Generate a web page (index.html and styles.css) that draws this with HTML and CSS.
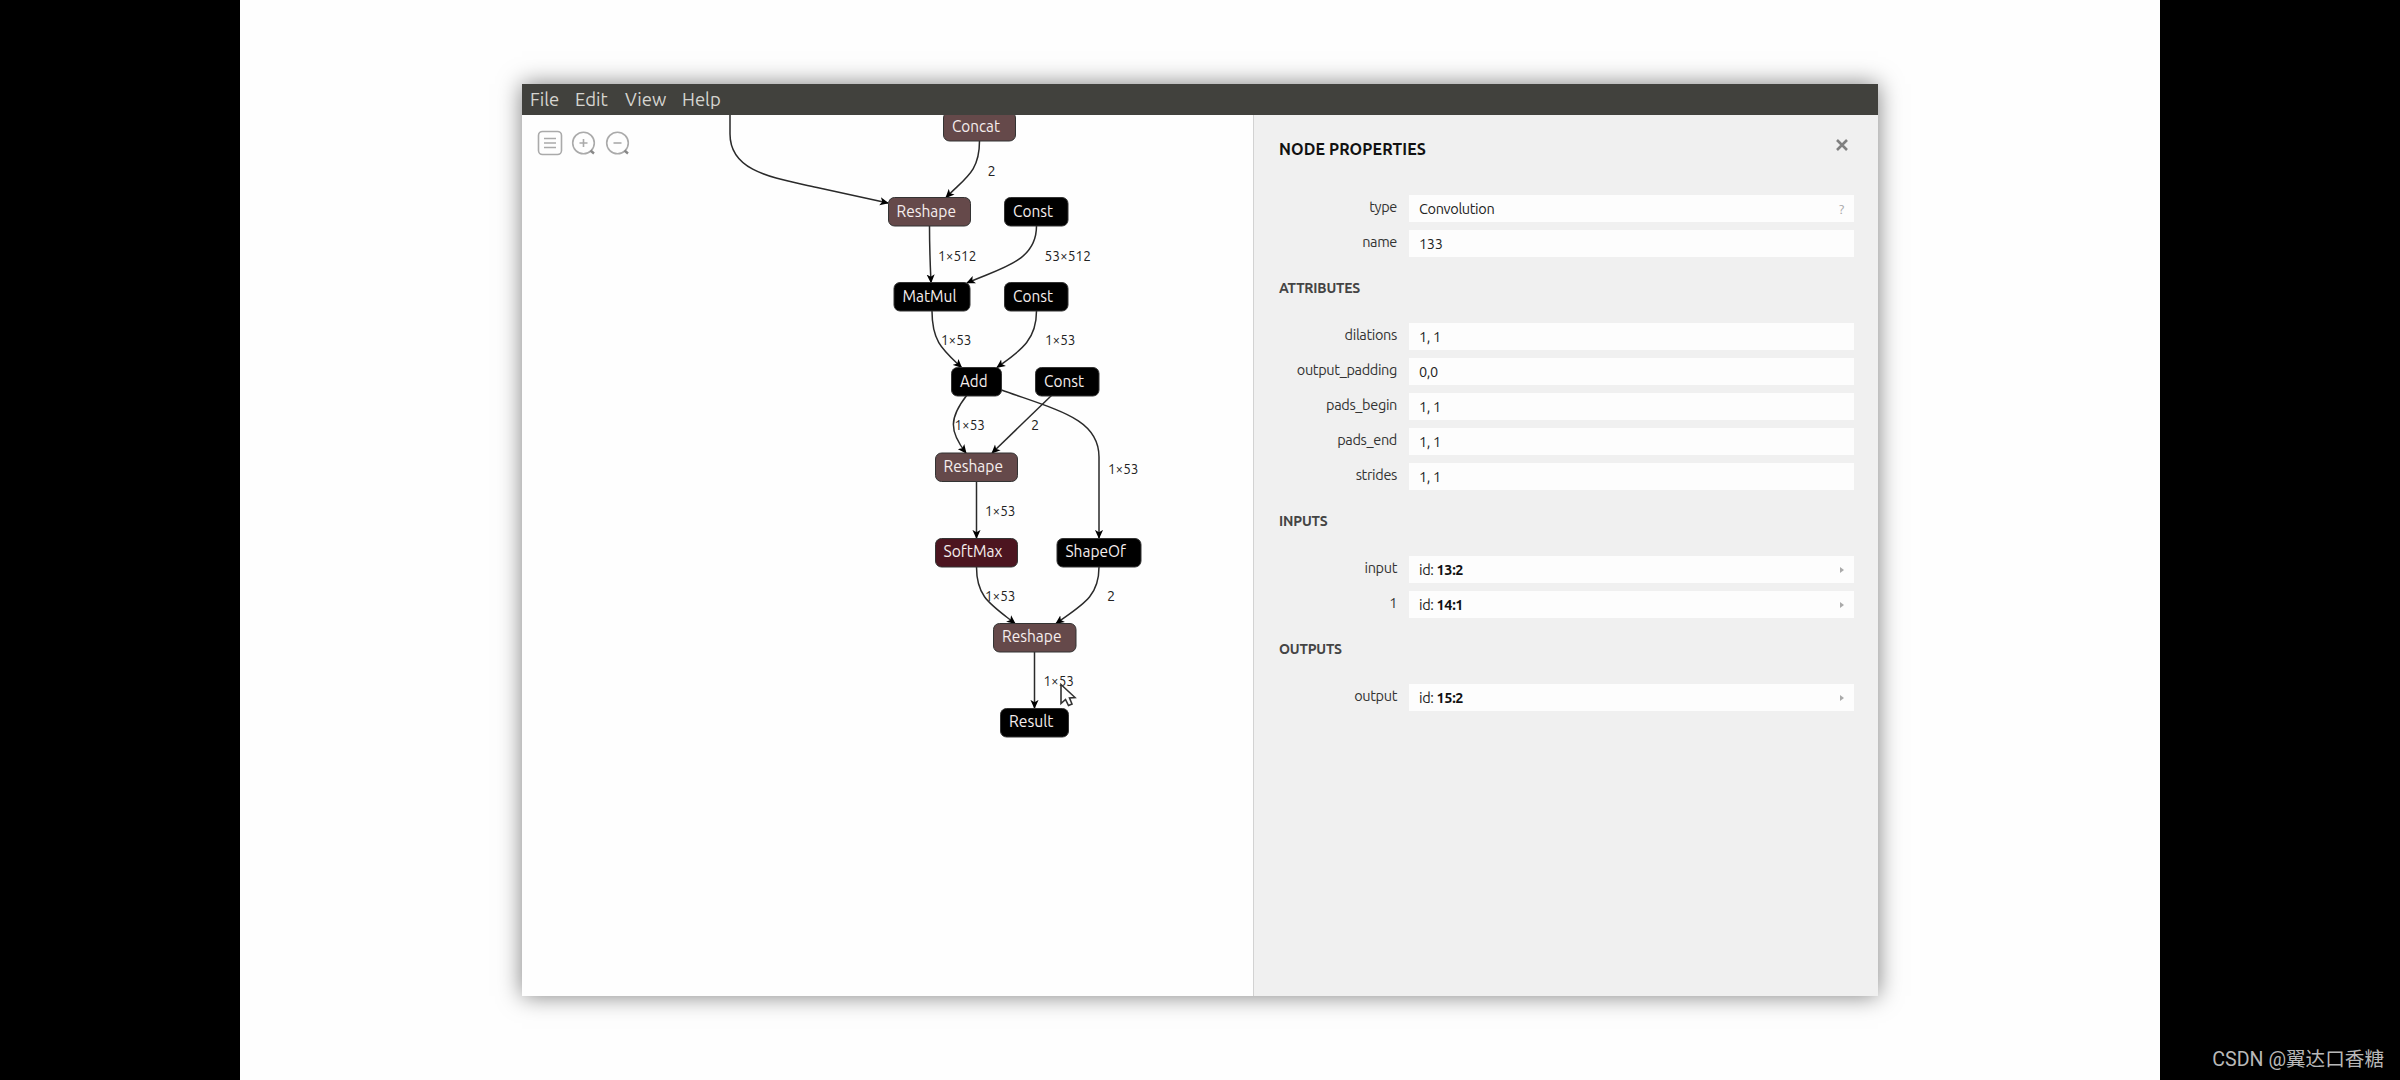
FILE: index.html
```
<!DOCTYPE html>
<html lang="en">

<head>
    <meta charset="utf-8">
    <title>Model Viewer</title>
    <link rel="stylesheet" href="styles.css">
</head>

<body>
    <main class="stage">
        <div class="window">
            <nav class="menubar">
                <span class="m-file">File</span>
                <span class="m-edit">Edit</span>
                <span class="m-view">View</span>
                <span class="m-help">Help</span>
            </nav>

            <div class="content">
                <section class="graph">
                    <svg class="canvas" width="731" height="881" viewBox="522 115 731 881">
                        <defs>
                            <marker id="arrow" viewBox="0 0 10 10" refX="9" refY="5" markerWidth="9" markerHeight="9" markerUnits="userSpaceOnUse" orient="auto">
                                <path d="M0 0.5 L10 5 L0 9.5 L2.5 5 Z" />
                            </marker>
                        </defs>

                        <!-- edges -->
                        <g class="edge">
                            <path d="M730 110 V134 C730 173 776 178 817 187.5 L888 203" />
                            <path d="M979.5 141 C979.5 172 965 178 946 197.5" />
                            <path d="M929.5 226 C929.5 250 930 260 931 282.5" />
                            <path d="M1036.5 226 C1036.5 262 1000 268 967 283" />
                            <path d="M932 311 C932 342 943 350 961.5 367.5" />
                            <path d="M1036.5 311 C1036.5 342 1018 352 997 367.5" />
                            <path d="M967 395 C949 418 949 431 966 453" />
                            <path d="M1052 395 L992 453" />
                            <path d="M1001.5 390 C1060 411 1099 419 1099 457 V538" />
                            <path d="M976.5 481 V538" />
                            <path d="M976.5 567 C976.5 597 990 604 1015 623.5" />
                            <path d="M1099 567 C1099 597 1082 605 1056 623.5" />
                            <path d="M1034.5 652 V708" />
                        </g>

                        <!-- nodes -->
                        <g class="node shape">
                            <rect x="943.5" y="112" width="72" height="29" rx="6" />
                            <rect x="888.5" y="197.5" width="82" height="28.5" rx="6" />
                            <rect x="935.5" y="453" width="82" height="28.5" rx="6" />
                            <rect x="993.5" y="623.5" width="82.5" height="28.5" rx="6" />
                        </g>
                        <g class="node softmax">
                            <rect x="935.5" y="538.5" width="82" height="28.5" rx="6" />
                        </g>
                        <g class="node plain">
                            <rect x="1004.5" y="197.5" width="63.5" height="28.5" rx="6" />
                            <rect x="894" y="282.5" width="76" height="28.5" rx="6" />
                            <rect x="1004.5" y="282.5" width="63.5" height="28.5" rx="6" />
                            <rect x="951.5" y="367.5" width="50" height="28.5" rx="6" />
                            <rect x="1035.5" y="367.5" width="63.5" height="28.5" rx="6" />
                            <rect x="1057" y="538.5" width="84" height="28.5" rx="6" />
                            <rect x="1000.5" y="708.5" width="68" height="28.5" rx="6" />
                        </g>
                        <g class="node-text">
                            <text x="952" y="131.5" textLength="48" lengthAdjust="spacingAndGlyphs">Concat</text>
                            <text x="896.5" y="217" textLength="59.5" lengthAdjust="spacingAndGlyphs">Reshape</text>
                            <text x="1013" y="217" textLength="40" lengthAdjust="spacingAndGlyphs">Const</text>
                            <text x="902.5" y="302" textLength="54" lengthAdjust="spacingAndGlyphs">MatMul</text>
                            <text x="1013" y="302" textLength="40" lengthAdjust="spacingAndGlyphs">Const</text>
                            <text x="960" y="387" textLength="27.5" lengthAdjust="spacingAndGlyphs">Add</text>
                            <text x="1044" y="387" textLength="40" lengthAdjust="spacingAndGlyphs">Const</text>
                            <text x="943.5" y="472" textLength="59.5" lengthAdjust="spacingAndGlyphs">Reshape</text>
                            <text x="943.5" y="557" textLength="59" lengthAdjust="spacingAndGlyphs">SoftMax</text>
                            <text x="1065.5" y="557" textLength="60.5" lengthAdjust="spacingAndGlyphs">ShapeOf</text>
                            <text x="1002" y="642" textLength="59.5" lengthAdjust="spacingAndGlyphs">Reshape</text>
                            <text x="1009" y="727" textLength="44.5" lengthAdjust="spacingAndGlyphs">Result</text>
                        </g>

                        <!-- tensor shapes -->
                        <g class="edge-text">
                            <text x="987.5" y="175.5">2</text>
                            <text x="938" y="260.5" textLength="38.5" lengthAdjust="spacingAndGlyphs">1×512</text>
                            <text x="1044.5" y="260.5" textLength="46.5" lengthAdjust="spacingAndGlyphs">53×512</text>
                            <text x="941" y="344.5" textLength="30.5" lengthAdjust="spacingAndGlyphs">1×53</text>
                            <text x="1045" y="344.5" textLength="30.5" lengthAdjust="spacingAndGlyphs">1×53</text>
                            <text x="954.5" y="430" textLength="30.5" lengthAdjust="spacingAndGlyphs">1×53</text>
                            <text x="1031" y="430">2</text>
                            <text x="1108" y="473.5" textLength="30.5" lengthAdjust="spacingAndGlyphs">1×53</text>
                            <text x="985" y="516" textLength="30.5" lengthAdjust="spacingAndGlyphs">1×53</text>
                            <text x="985" y="601" textLength="30.5" lengthAdjust="spacingAndGlyphs">1×53</text>
                            <text x="1107" y="601">2</text>
                            <text x="1043.5" y="686" textLength="30.5" lengthAdjust="spacingAndGlyphs">1×53</text>
                        </g>

                        <path class="cursor" d="M1061 684.5 V703.5 L1065.5 699.5 L1068.5 705.5 L1072 704 L1069.5 698 L1075 697.5 Z" />
                    </svg>

                    <div class="toolbar">
                        <svg width="26" height="26" viewBox="0 0 26 26">
                            <rect x="1.5" y="1.5" width="23" height="23" rx="4" />
                            <path d="M7 8.5h12M7 13h12M7 17.5h12" />
                        </svg>
                        <svg width="26" height="26" viewBox="0 0 26 26">
                            <circle cx="12.5" cy="13" r="10.8" />
                            <path d="M8.5 13h8M12.5 9v8" />
                            <path class="handle" d="M19.5 20.5l3.5 3" />
                        </svg>
                        <svg width="26" height="26" viewBox="0 0 26 26">
                            <circle cx="12.5" cy="13" r="10.8" />
                            <path d="M8.5 13h8" />
                            <path class="handle" d="M19.5 20.5l3.5 3" />
                        </svg>
                    </div>
                </section>

                <aside class="sidebar">
                    <header>
                        <h1>NODE PROPERTIES</h1>
                        <svg class="close" width="12" height="12" viewBox="0 0 12 12">
                            <path d="M1 1l10 10M11 1L1 11" />
                        </svg>
                    </header>

                    <div class="group">
                        <div class="row"><label>type</label><div class="value">Convolution<i class="help">?</i></div></div>
                        <div class="row"><label>name</label><div class="value">133</div></div>
                    </div>

                    <h2>ATTRIBUTES</h2>
                    <div class="group">
                        <div class="row"><label>dilations</label><div class="value">1, 1</div></div>
                        <div class="row"><label>output_padding</label><div class="value">0,0</div></div>
                        <div class="row"><label>pads_begin</label><div class="value">1, 1</div></div>
                        <div class="row"><label>pads_end</label><div class="value">1, 1</div></div>
                        <div class="row"><label>strides</label><div class="value">1, 1</div></div>
                    </div>

                    <h2>INPUTS</h2>
                    <div class="group">
                        <div class="row"><label>input</label><div class="value"><span>id: <b>13:2</b></span><i class="expand"></i></div></div>
                        <div class="row"><label>1</label><div class="value"><span>id: <b>14:1</b></span><i class="expand"></i></div></div>
                    </div>

                    <h2>OUTPUTS</h2>
                    <div class="group">
                        <div class="row"><label>output</label><div class="value"><span>id: <b>15:2</b></span><i class="expand"></i></div></div>
                    </div>
                </aside>
            </div>
        </div>
    </main>
    <div class="watermark">CSDN @翼达口香糖</div>
</body>

</html>
```
FILE: styles.css
```
* {
    box-sizing: border-box;
}

body {
    margin: 0;
    height: 1080px;
    background: #000;
    font-family: Ubuntu, "Noto Sans", sans-serif;
    overflow: hidden;
}

.stage {
    width: 1920px;
    height: 1080px;
    margin: 0 auto;
    padding: 84px 282px;
    background: #fefefe;
}

.window {
    width: 1356px;
    height: 912px;
    background: #fefefe;
    box-shadow: 0 0 22px rgba(0, 0, 0, .5);
}

.menubar {
    display: flex;
    height: 31px;
    padding-left: 8px;
    background: #41413d;
    color: #d6d5d0;
    font-size: 18.5px;
    line-height: 31px;
}

.m-file {
    width: 45px;
}

.m-edit {
    width: 50px;
}

.m-view {
    width: 57px;
}

.content {
    display: flex;
    height: 881px;
}

.graph {
    position: relative;
    width: 731px;
}

.canvas {
    display: block;
}

.edge path {
    fill: none;
    stroke: #2a2a2a;
    stroke-width: 1.5;
    marker-end: url(#arrow);
}

.node rect {
    stroke: #333;
    stroke-width: 1;
}

.shape rect {
    fill: #65494a;
}

.softmax rect {
    fill: #4c1520;
}

.plain rect {
    fill: #000;
}

.node-text {
    fill: #f6eeee;
    font-size: 16.5px;
}

.edge-text {
    fill: #222;
    font-size: 14.5px;
}

.cursor {
    fill: #fff;
    stroke: #333;
    stroke-width: 1.6;
}

/* floats over the graph */
.toolbar {
    position: absolute;
    top: 15px;
    left: 15px;
    display: flex;
    gap: 8px;
}

.toolbar svg {
    fill: none;
    stroke: #aaa;
    stroke-width: 1.6;
}

.toolbar .handle {
    stroke: #888;
    stroke-width: 2.4;
}

.sidebar {
    width: 625px;
    padding: 0 24px 0 25px;
    background: #f0f0f0;
    border-left: 1px solid #d2d2d2;
}

.sidebar header {
    display: flex;
    justify-content: space-between;
    height: 80px;
    padding: 24px 6px 0 0;
}

.close {
    stroke: #808080;
    stroke-width: 2.6;
}

h1,
h2 {
    margin: 0;
    font-weight: 700;
    white-space: nowrap;
}

h1 {
    color: #111;
    font-size: 16px;
    line-height: 20px;
    letter-spacing: .1px;
}

h2 {
    height: 66px;
    padding-top: 21px;
    color: #444;
    font-size: 14px;
    line-height: 20px;
    letter-spacing: -.2px;
}

.row {
    display: flex;
    height: 27px;
    margin-bottom: 8px;
}

.group .row:last-child {
    margin-bottom: 0;
}

.row label {
    width: 118px;
    margin-right: 12px;
    color: #333;
    font-size: 14.5px;
    line-height: 24px;
    text-align: right;
    letter-spacing: -.35px;
}

.value {
    display: flex;
    flex: 1;
    justify-content: space-between;
    align-items: center;
    padding: 0 8px 0 10px;
    background: #fdfdfd;
    color: #222;
    font-size: 14.5px;
    line-height: 26px;
    letter-spacing: -.35px;
}

.value b {
    color: #111;
}

.help {
    margin-right: 2px;
    color: #aaa;
    font-size: 13.5px;
    font-style: normal;
}

.expand {
    border: 3px solid transparent;
    border-left: 4px solid #aaa;
    border-right: 0;
    margin-right: 2px;
}

/* sits on the black side bar */
.watermark {
    position: absolute;
    right: 16px;
    bottom: 5px;
    color: #b8b8b8;
    font-family: Roboto, "Noto Sans CJK SC", sans-serif;
    font-size: 19.6px;
    line-height: 30px;
    white-space: nowrap;
}
```
